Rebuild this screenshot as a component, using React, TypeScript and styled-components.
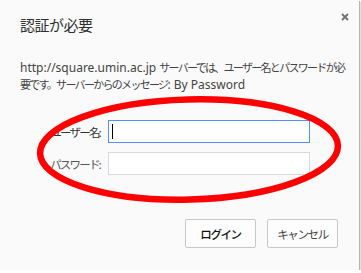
import React from 'react';
import styled, { createGlobalStyle } from 'styled-components';

const GlobalStyle = createGlobalStyle`
  html, body {
    margin: 0;
    padding: 0;
    background: #ffffff;
  }
  body {
    font-family: 'Noto Sans', 'Noto Sans CJK JP', sans-serif;
  }
`;

const Dialog = styled.div`
  position: relative;
  width: 359px;
  height: 270px;
  box-sizing: border-box;
  background: #fafafa;
  box-shadow: 1px 1px 0 #b4b4b4, 2px 2px 1px rgba(0, 0, 0, 0.12);
  padding: 15px 0 0 20px;
`;

const Title = styled.h1`
  margin: 0;
  font-family: 'Noto Sans CJK JP', sans-serif;
  font-size: 15px;
  font-weight: 400;
  line-height: 20px;
  letter-spacing: -0.5px;
  color: #2e2e2e;
`;

const CloseButton = styled.button`
  position: absolute;
  top: 10px;
  right: 7px;
  width: 14px;
  height: 14px;
  padding: 0;
  border: 0;
  background: none;
  display: flex;
  align-items: center;
  justify-content: center;
`;

const Message = styled.p`
  margin: 24px 0 0;
  font-family: 'Noto Sans', sans-serif;
  font-size: 12px;
  line-height: 17px;
  color: #444444;
`;

const Jp = styled.span`
  font-family: 'Noto Sans CJK JP', sans-serif;
  font-size: 11px;
  letter-spacing: -1.7px;
`;

const Form = styled.div`
  display: grid;
  grid-template-columns: 80px 202px;
  column-gap: 8px;
  row-gap: 9px;
  margin-top: 27px;
`;

const Label = styled.label<{ $muted?: boolean }>`
  justify-self: end;
  align-self: center;
  font-family: 'Noto Sans CJK JP', sans-serif;
  font-size: 11.5px;
  letter-spacing: -1.8px;
  color: ${(p) => (p.$muted ? '#555555' : '#333333')};
`;

const Field = styled.div`
  position: relative;
`;

const Input = styled.input<{ $focused?: boolean }>`
  display: block;
  box-sizing: border-box;
  width: 202px;
  height: 23px;
  margin: 0;
  padding: 0 4px;
  background: #ffffff;
  border: 1px solid ${(p) => (p.$focused ? '#4d90fe' : '#d9d9d9')};
  border-radius: 0;
  outline: none;
  font-size: 12px;
`;

const Caret = styled.span`
  position: absolute;
  left: 4px;
  top: 4px;
  width: 1px;
  height: 15px;
  background: #000000;
`;

const Buttons = styled.div`
  display: flex;
  justify-content: flex-end;
  gap: 11px;
  margin-top: 44px;
  padding-right: 21px;
`;

const Button = styled.button<{ $primary?: boolean }>`
  width: 71px;
  height: 29px;
  box-sizing: border-box;
  border: 1px solid #c8c8c8;
  border-radius: 2px;
  background: #fdfdfd;
  font-family: 'Noto Sans CJK JP', sans-serif;
  font-size: 11.5px;
  letter-spacing: -1.4px;
  color: ${(p) => (p.$primary ? '#111111' : '#444444')};
  font-weight: ${(p) => (p.$primary ? 500 : 400)};
  padding: 0;
`;

const Annotation = styled.svg`
  position: absolute;
  left: 0;
  top: 0;
  pointer-events: none;
`;

const App = () => {
  return (
    <>
      <GlobalStyle />
      <Dialog>
        <Title>認証が必要</Title>
        <CloseButton aria-label="閉じる">
          <svg width="8" height="8" viewBox="0 0 8 8">
            <path d="M1 1L7 7M7 1L1 7" stroke="#6f6f6f" strokeWidth="1.8" />
          </svg>
        </CloseButton>
        <Message>
          http://square.umin.ac.jp <Jp>サーバーでは、ユーザー名とパスワードが必</Jp>
          <br />
          <Jp>要です。サーバーからのメッセージ</Jp>: By Password
        </Message>
        <Form>
          <Label>ユーザー名:</Label>
          <Field>
            <Input $focused />
            <Caret />
          </Field>
          <Label $muted>パスワード:</Label>
          <Field>
            <Input type="password" />
          </Field>
        </Form>
        <Buttons>
          <Button $primary>ログイン</Button>
          <Button>キャンセル</Button>
        </Buttons>
        <Annotation width="361" height="273" viewBox="0 0 361 273">
          <ellipse
            cx="189"
            cy="149.5"
            rx="149"
            ry="50"
            fill="none"
            stroke="#ff0000"
            strokeWidth="6.5"
            transform="rotate(-1.5 189 149.5)"
          />
        </Annotation>
      </Dialog>
    </>
  );
};

export default App;
